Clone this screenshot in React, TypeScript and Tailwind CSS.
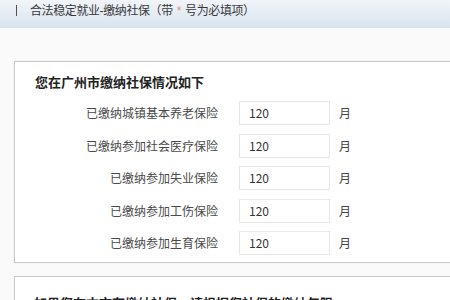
export default function App() {
  const rows = [
    '已缴纳城镇基本养老保险',
    '已缴纳参加社会医疗保险',
    '已缴纳参加失业保险',
    '已缴纳参加工伤保险',
    '已缴纳参加生育保险',
  ];

  return (
    <div
      className="w-[450px] h-[300px] overflow-hidden bg-[#fafafa] text-[#333]"
      style={{ fontFamily: '"Noto Sans CJK SC", "Liberation Sans", sans-serif' }}
    >
      {/* Header */}
      <div className="h-[28px] flex items-start pt-[3px] bg-gradient-to-b from-[#f1f5fa] to-[#d8e3ee]">
        <div className="ml-[16px] mt-[2px] w-[1px] h-[11px] bg-[#555]" />
        <div
          className="ml-[13px] text-[12px] leading-[16px] tracking-[-0.4px] text-[#3a3a3a]"
          style={{ fontFamily: '"Liberation Sans", "Noto Sans CJK SC", sans-serif' }}
        >
          合法稳定就业-缴纳社保（带<span className="mx-[4px] text-[#f08a8a]">*</span>号为必填项）
        </div>
      </div>

      <div className="pl-[14px] pt-[33px]">
        {/* Panel 1 */}
        <div className="w-[460px] h-[202px] bg-white border-t border-l border-b border-[#c9c9c9] shadow-[0_0_2px_rgba(0,0,0,0.08)]">
          <div className="pl-[20px] pt-[11px] text-[13px] font-bold leading-[18px] text-[#222]">
            您在广州市缴纳社保情况如下
          </div>
          <div className="mt-[10px] flex flex-col gap-[8.6px]">
            {rows.map((label) => (
              <div key={label} className="flex items-center h-[24px]">
                <div className="w-[203px] text-right text-[12px] text-[#4a4a4a]">{label}</div>
                <div className="ml-[21px] w-[91px] h-[24px] border border-[#e6e6e6] bg-white flex items-center pl-[9px] text-[12px] text-[#333]">
                  120
                </div>
                <div className="ml-[9px] text-[12px] text-[#444]">月</div>
              </div>
            ))}
          </div>
        </div>

        {/* Panel 2 */}
        <div className="mt-[13px] w-[460px] h-[60px] bg-white border-t border-l border-[#c9c9c9]">
          <div className="pl-[19px] pt-[17px] text-[13px] font-bold leading-[18px] text-[#222]">
            如果您在本市有缴纳社保，请根据您社保的缴纳年限
          </div>
        </div>
      </div>
    </div>
  );
}
